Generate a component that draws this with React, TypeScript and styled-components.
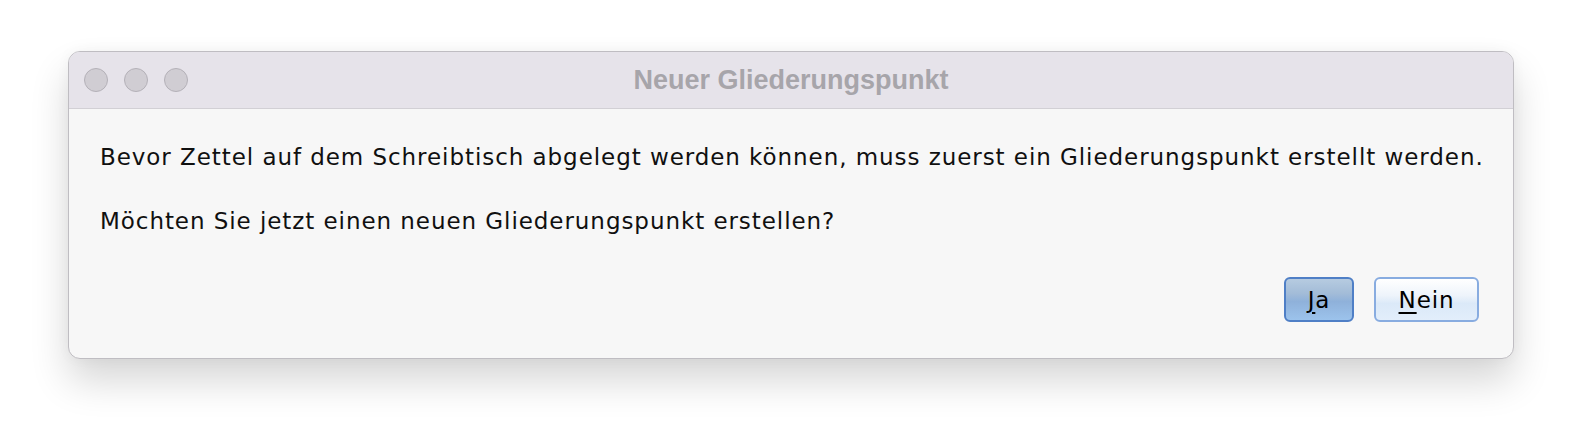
import React from "react";
import styled, { createGlobalStyle } from "styled-components";

const Global = createGlobalStyle`
  html, body { margin: 0; padding: 0; background: #ffffff; }
  body { width: 1582px; height: 442px; overflow: hidden; }
`;

const Stage = styled.div`
  padding: 51px 0 0 68px;
  box-sizing: border-box;
  width: 1582px;
  height: 442px;
`;

const Window = styled.div`
  width: 1446px;
  box-sizing: border-box;
  border: 1px solid #bfbdc2;
  border-radius: 12px;
  background: #f7f7f7;
  overflow: hidden;
  box-shadow: 0 22px 38px rgba(0, 0, 0, 0.16), 0 0 14px rgba(0, 0, 0, 0.04);
`;

const TitleBar = styled.div`
  position: relative;
  height: 56px;
  background: #e6e3ea;
  border-bottom: 1px solid #d2d0d5;
  display: flex;
  align-items: center;
  justify-content: center;
`;

const Lights = styled.div`
  position: absolute;
  left: 15px;
  top: 16px;
  display: flex;
  gap: 16px;
`;

const Light = styled.span`
  width: 24px;
  height: 24px;
  box-sizing: border-box;
  border-radius: 50%;
  background: #d0cdd3;
  border: 1px solid #b4b1b8;
`;

const Title = styled.div`
  font-family: "Liberation Sans", Arial, sans-serif;
  font-weight: 700;
  font-size: 27px;
  color: #a7a5aa;
  margin-top: 1px;
`;

const Body = styled.div`
  padding: 34px 31px 36px 31px;
  font-family: "DejaVu Sans", Verdana, sans-serif;
  font-size: 23px;
  letter-spacing: 0.94px;
  color: #101010;
`;

const Para = styled.p`
  margin: 0;
  line-height: 28px;
  white-space: nowrap;
  & + & { margin-top: 36px; }
`;

const Actions = styled.div`
  display: flex;
  justify-content: flex-end;
  gap: 20px;
  margin-top: 42px;
  padding-right: 3px;
`;

const Button = styled.button<{ $primary?: boolean }>`
  box-sizing: border-box;
  height: 45px;
  min-width: ${(p) => (p.$primary ? "70px" : "105px")};
  padding: 0 12px;
  border-radius: 6px;
  font-family: "DejaVu Sans", Verdana, sans-serif;
  font-size: 23px;
  letter-spacing: 0.9px;
  color: #000;
  border: 2px solid ${(p) => (p.$primary ? "#4f7fc6" : "#88ace0")};
  background: ${(p) =>
    p.$primary
      ? "linear-gradient(#b6cbe0 0%, #a3bcd8 35%, #8fb1da 55%, #9cc3ec 100%)"
      : "linear-gradient(#ffffff 0%, #eef4fb 40%, #dbe9f8 60%, #e2eefb 100%)"};
  display: flex;
  align-items: center;
  justify-content: center;
`;

const Mnemonic = styled.span`
  text-decoration: underline;
  text-underline-offset: 4px;
  text-decoration-thickness: 2px;
`;

export default function App() {
  return (
    <>
      <Global />
      <Stage>
        <Window>
          <TitleBar>
            <Lights>
              <Light />
              <Light />
              <Light />
            </Lights>
            <Title>Neuer Gliederungspunkt</Title>
          </TitleBar>
          <Body>
            <Para>
              Bevor Zettel auf dem Schreibtisch abgelegt werden können, muss zuerst ein Gliederungspunkt erstellt werden.
            </Para>
            <Para>Möchten Sie jetzt einen neuen Gliederungspunkt erstellen?</Para>
            <Actions>
              <Button $primary>
                <Mnemonic>J</Mnemonic>a
              </Button>
              <Button>
                <Mnemonic>N</Mnemonic>ein
              </Button>
            </Actions>
          </Body>
        </Window>
      </Stage>
    </>
  );
}
